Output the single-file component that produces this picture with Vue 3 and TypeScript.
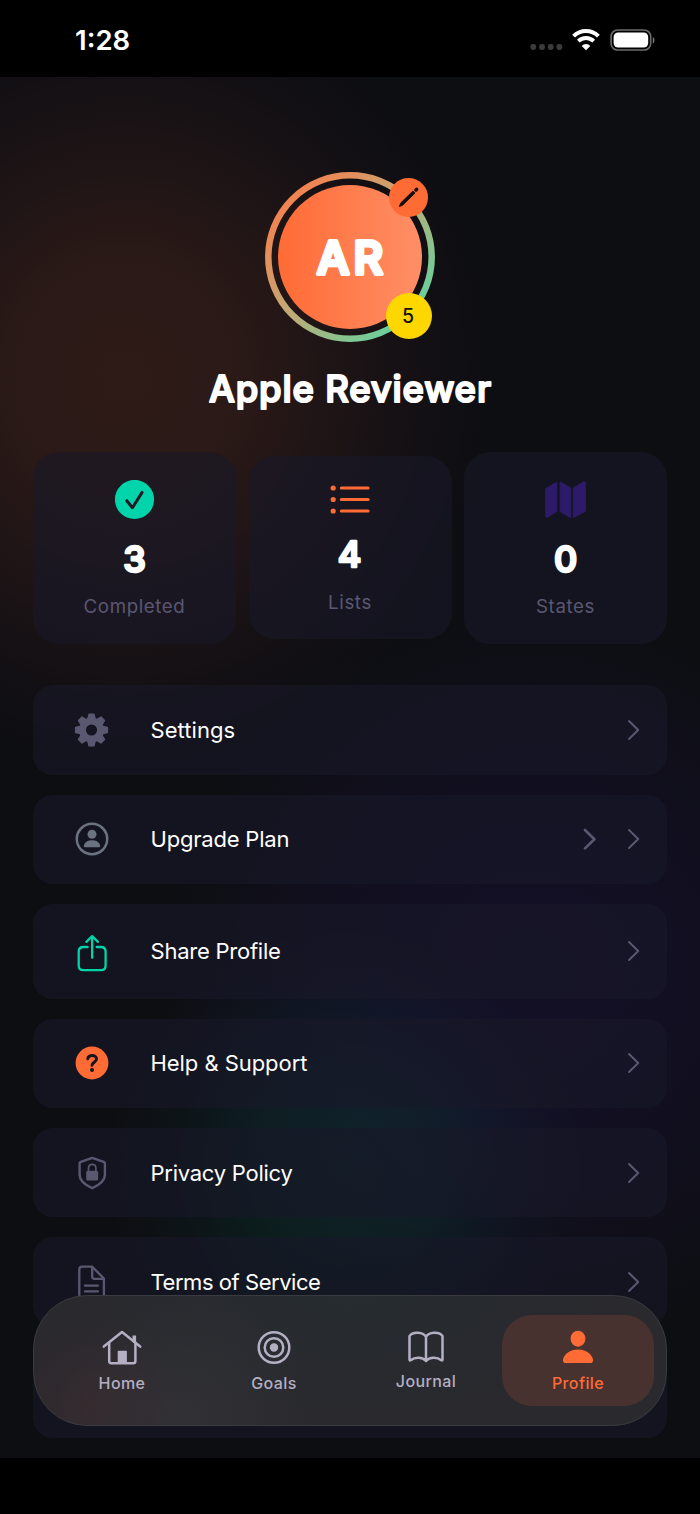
<script setup lang="ts">
interface Stat {
  icon: 'check' | 'list' | 'map'
  value: string
  label: string
}

interface MenuRow {
  icon: 'gear' | 'user' | 'share' | 'help' | 'shield' | 'doc' | 'none'
  label: string
  tall: string
  tracking: number
  extra?: boolean
}

interface Tab {
  icon: 'home' | 'goals' | 'journal' | 'profile'
  label: string
  active?: boolean
}

const stats: Stat[] = [
  { icon: 'check', value: '3', label: 'Completed' },
  { icon: 'list', value: '4', label: 'Lists' },
  { icon: 'map', value: '0', label: 'States' },
]

const rows: MenuRow[] = [
  { icon: 'gear', label: 'Settings', tall: 'h-a', tracking: 0.05 },
  { icon: 'user', label: 'Upgrade Plan', tall: 'h-b', tracking: -0.2, extra: true },
  { icon: 'share', label: 'Share Profile', tall: 'h-c', tracking: -0.24 },
  { icon: 'help', label: 'Help & Support', tall: 'h-b', tracking: -0.05 },
  { icon: 'shield', label: 'Privacy Policy', tall: 'h-b', tracking: -0.25 },
  { icon: 'doc', label: 'Terms of Service', tall: 'h-b', tracking: -0.45 },
  { icon: 'none', label: '', tall: 'h-d', tracking: 0 },
]

const tabs: Tab[] = [
  { icon: 'home', label: 'Home' },
  { icon: 'goals', label: 'Goals' },
  { icon: 'journal', label: 'Journal' },
  { icon: 'profile', label: 'Profile', active: true },
]

const teeth: number[] = [0, 45, 90, 135, 180, 225, 270, 315]
</script>

<template>
  <div class="phone">
    <header class="status">
      <span class="time">1:28</span>
      <div class="indicators">
        <svg class="dots" width="34" height="8" viewBox="0 0 34 8">
          <rect v-for="n in 4" :key="n" :x="(n - 1) * 8.7 + 0.4" y="1" width="5.8" height="6" rx="2.4" fill="#3b3b3d" />
        </svg>
        <svg class="wifi" width="28" height="22" viewBox="0 0 28 22">
          <path d="M1.6 7.2A17.4 17.4 0 0 1 26.4 7.2" fill="none" stroke="#fff" stroke-width="4" />
          <path d="M6.3 12.200A10.900 10.900 0 0 1 21.700 12.200" fill="none" stroke="#fff" stroke-width="3.800" />
          <path d="M14 21.200L9.700 16.900A6 6 0 0 1 18.300 16.900Z" fill="#fff" />
        </svg>
        <svg class="battery" width="46" height="22" viewBox="0 0 46 22">
          <rect x="1.1" y="1" width="39.6" height="20" rx="6.6" fill="none" stroke="#6c6c6e" stroke-width="1.6" />
          <rect x="3.6" y="3.4" width="34.6" height="15.2" rx="4.6" fill="#fff" />
          <path d="M42.8 8v6.6c2.2-.7 2.2-5.900 0-6.600z" fill="#77777a" />
        </svg>
      </div>
    </header>

    <main class="stage">
      <section class="profile">
        <div class="avatar">
          <svg class="ring" width="170" height="170" viewBox="0 0 170 170">
            <defs>
              <linearGradient id="ringFill" x1="0.1" y1="0.1" x2="0.9" y2="0.9">
                <stop offset="0" stop-color="#f77f4d" />
                <stop offset="0.5" stop-color="#bfab77" />
                <stop offset="1" stop-color="#5fd4a0" />
              </linearGradient>
              <linearGradient id="faceFill" x1="0" y1="0" x2="1" y2="0">
                <stop offset="0" stop-color="#ff6b35" />
                <stop offset="1" stop-color="#ff8f66" />
              </linearGradient>
            </defs>
            <circle cx="85" cy="85" r="81.700" fill="none" stroke="url(#ringFill)" stroke-width="6.500" />
            <circle cx="85" cy="85" r="72" fill="url(#faceFill)" />
            <text class="round initials" x="52" y="102.300" textLength="66">AR</text>
          </svg>
          <div class="edit">
            <svg width="39" height="39" viewBox="0 0 39 39">
              <path d="M10.300 28.600l1.300-3.500L24 12.900l2.100 2.100L13.700 27.200z" fill="#15100f" stroke="#15100f" stroke-width="0.800" stroke-linejoin="round" />
              <path d="M27 11.900l.6-.6" stroke="#15100f" stroke-width="3.600" stroke-linecap="round" />
            </svg>
          </div>
          <div class="level">5</div>
        </div>
        <svg class="name" width="300" height="50" viewBox="0 0 300 50">
          <text class="round title" x="9" y="37.300" textLength="282">Apple Reviewer</text>
        </svg>
      </section>

      <section class="stats">
        <article v-for="s in stats" :key="s.label" class="stat" :class="s.icon">
          <svg v-if="s.icon === 'check'" width="40" height="40" viewBox="0.5 0.5 40 40">
            <circle cx="20" cy="20" r="19.600" fill="#00d4aa" />
            <path d="M12.300 21.200l5.600 7L27.600 12.900" fill="none" stroke="#211a24" stroke-width="3" stroke-linecap="round" stroke-linejoin="round" />
          </svg>
          <svg v-else-if="s.icon === 'list'" width="40" height="32" viewBox="0 0 40 32">
            <g v-for="y in [4, 15.500, 27]" :key="y" fill="#ff6b35">
              <circle cx="3.200" :cy="y" r="2.600" />
              <rect x="9.800" :y="y - 1.500" width="29.800" height="3" rx="1.500" />
            </g>
          </svg>
          <svg v-else width="42" height="40" viewBox="0.5 0.3 42 40">
            <g fill="#2d1b69" stroke="#2d1b69" stroke-width="1" stroke-linejoin="round">
              <path d="M1.200 9L12.200 2.500V31.800L3 37.500Q1.200 38.200 1.200 36.500z" />
              <path d="M15.600 2.200L26.200 8.300V38L15.600 31.800z" />
              <path d="M28.800 8.300L39 2.200Q40.800 1.600 40.800 3.300V31.600L28.800 38z" />
            </g>
          </svg>
          <svg class="value" width="60" height="60" viewBox="0 0 60 60">
            <text class="round number" x="29.500" y="42" text-anchor="middle">{{ s.value }}</text>
          </svg>
          <span class="caption">{{ s.label }}</span>
        </article>
      </section>

      <nav class="menu">
        <div v-for="(r, i) in rows" :key="i" class="row" :class="r.tall">
          <div class="glyph">
            <svg v-if="r.icon === 'gear'" width="36" height="36" viewBox="-18 -18 36 36">
              <circle r="9.300" fill="none" stroke="#5a5870" stroke-width="7.200" />
              <path v-for="a in teeth" :key="a" d="M-3.700 -11.500L-2.500 -16.300H2.500L3.700 -11.500z" :transform="`rotate(${a})`" fill="#5a5870" stroke="#5a5870" stroke-width="1.500" stroke-linejoin="round" />
            </svg>
            <svg v-else-if="r.icon === 'user'" width="34" height="34" viewBox="0 0 34 34">
              <circle cx="17" cy="17" r="15.200" fill="none" stroke="#6b7280" stroke-width="2.500" />
              <circle cx="17" cy="12.200" r="4.500" fill="#6b7280" />
              <path d="M9.500 25.200C7.800 25.200 8.900 18.300 17 18.300S26.200 25.200 24.500 25.200z" fill="#6b7280" />
            </svg>
            <svg v-else-if="r.icon === 'share'" class="nudge" width="34" height="38" viewBox="0 0 34 38">
              <path d="M12.600 13H8.400Q3.700 13 3.700 17.700V31.500Q3.700 36.200 8.400 36.200H25.900Q30.600 36.200 30.600 31.500V17.700Q30.600 13 25.900 13H21.700M17.150 23.800V2.600M11.400 7.900L17.150 2.100L22.900 7.900" fill="none" stroke="#00d4aa" stroke-width="2.300" stroke-linecap="round" stroke-linejoin="round" />
            </svg>
            <svg v-else-if="r.icon === 'help'" width="34" height="34" viewBox="0 0 34 34">
              <circle cx="17" cy="17" r="16.400" fill="#ff6b35" />
              <path d="M12.800 12.800C13 8.300 21.700 8.300 21.500 13C21.400 16.200 17.100 16.200 17 19.300" fill="none" stroke="#15141f" stroke-width="3" stroke-linecap="round" />
              <circle cx="17" cy="24" r="2" fill="#15141f" />
            </svg>
            <svg v-else-if="r.icon === 'shield'" width="34" height="34" viewBox="0 0 34 34">
              <path d="M17.200 1.900L29.300 6.200Q29.900 6.500 29.900 7.200V19C29.900 26 22 30 17.200 32.200C12.400 30 4.600 26 4.600 19V7.200Q4.600 6.500 5.200 6.200z" fill="none" stroke="#5a5870" stroke-width="2.400" stroke-linejoin="round" />
              <rect x="11.200" y="14.800" width="12" height="9.800" rx="1.600" fill="#5a5870" />
              <path d="M13.500 15.500V12.300C13.500 7 20.900 7 20.900 12.300V15.500" fill="none" stroke="#5a5870" stroke-width="1.700" />
            </svg>
            <svg v-else-if="r.icon === 'doc'" width="34" height="36" viewBox="0 0 34 36">
              <path d="M17.200 2.700H7Q4.300 2.700 4.300 5.400V31Q4.300 33.700 7 33.700H26.200Q28.900 33.700 28.900 31V14.500zM17.200 2.700V12.600Q17.200 14.900 19.500 14.900H28.700M9.900 21.600H22.900M9.900 27.400H22.900" fill="none" stroke="#5a5870" stroke-width="2.300" stroke-linecap="round" stroke-linejoin="round" />
            </svg>
          </div>
          <span class="label" :style="{ letterSpacing: `${r.tracking}px` }">{{ r.label }}</span>
          <svg v-if="r.extra" class="chev bold" width="14" height="22" viewBox="0 0 14 22">
            <path d="M2 2L11.400 11.200L2 20.400" />
          </svg>
          <svg v-if="r.icon !== 'none'" class="chev" width="14" height="22" viewBox="0 0 14 22">
            <path d="M2 2L11.200 11L2 20" />
          </svg>
        </div>
      </nav>

      <nav class="tabbar">
        <div v-for="t in tabs" :key="t.label" class="tab" :class="[t.icon, { active: t.active }]">
          <svg v-if="t.icon === 'home'" width="40" height="36" viewBox="0.5 0 40 36">
            <g fill="none" stroke="#b4afc3" stroke-width="2.500" stroke-linecap="round" stroke-linejoin="round">
              <path d="M2.300 16.600L20.500 2.100L38.700 16.600" />
              <path d="M7.700 13V31Q7.700 33.300 10 33.300H31.600Q33.900 33.300 33.900 31V13" />
            </g>
            <path d="M31 5.500h3.600v9.500l-3.600-3z" fill="#b4afc3" />
            <rect x="16.200" y="20.800" width="9.200" height="12" rx="0.800" fill="#b4afc3" />
          </svg>
          <svg v-else-if="t.icon === 'goals'" width="36" height="36" viewBox="0 0.5 36 36">
            <circle cx="18" cy="18" r="15.300" fill="none" stroke="#b4afc3" stroke-width="2.500" />
            <circle cx="18" cy="18" r="9.300" fill="none" stroke="#b4afc3" stroke-width="2.500" />
            <circle cx="18" cy="18" r="4.200" fill="#b4afc3" />
          </svg>
          <svg v-else-if="t.icon === 'journal'" width="38" height="32" viewBox="0 0 38 32">
            <path d="M19 6C16.500 .8 5.500 .2 2.500 5.200V28.600Q2.500 29.900 3.700 29.200C8 25.800 15.500 26 19 30C22.500 26 30 25.800 34.300 29.200Q35.500 29.900 35.500 28.600V5.200C32.500 .2 21.500 .8 19 6V29.500" fill="none" stroke="#b4afc3" stroke-width="2.500" stroke-linecap="round" stroke-linejoin="round" />
          </svg>
          <svg v-else width="32" height="34" viewBox="0 0 32 34">
            <ellipse cx="16" cy="8.700" rx="7.400" ry="8" fill="#ff6b35" />
            <path d="M4 33C1.600 33 1 31.800 1 30.400C1 26 6.600 19.600 16 19.600S31 26 31 30.400C31 31.800 30.400 33 28 33z" fill="#ff6b35" />
          </svg>
          <span class="tab-label">{{ t.label }}</span>
        </div>
      </nav>
    </main>
    <footer class="home-area"></footer>
  </div>
</template>

<style>
html,
body {
  margin: 0;
  background: #000;
}
</style>

<style scoped>
.phone {
  width: 700px;
  height: 1514px;
  background: #000;
  color: #fff;
  font-family: Inter, 'Liberation Sans', sans-serif;
  overflow: hidden;
  display: flex;
  flex-direction: column;
}

.status {
  height: 77px;
  flex: none;
  display: flex;
  justify-content: space-between;
  padding: 0 44px 0 75px;
  box-sizing: border-box;
}

.time {
  font-size: 27.500px;
  font-weight: 600;
  line-height: 32px;
  margin-top: 24px;
}

.indicators {
  display: flex;
  align-items: flex-start;
}

.dots {
  margin: 43px 8px 0 0;
}

.wifi {
  margin: 29px 10px 0 0;
}

.battery {
  margin-top: 29px;
}

.stage {
  position: relative;
  height: 1381px;
  flex: none;
  overflow: hidden;
  background:
    radial-gradient(ellipse 375px 395px at 125px 300px, rgba(255, 107, 58, 0.137) 0%, rgba(255, 107, 58, 0.12) 30%, rgba(255, 100, 70, 0.062) 60%, rgba(255, 90, 90, 0.022) 80%, rgba(255, 90, 90, 0) 100%),
    radial-gradient(circle 240px at 345px 1091px, rgba(0, 212, 160, 0.1) 0%, rgba(0, 212, 165, 0.082) 35%, rgba(0, 190, 190, 0.035) 70%, rgba(0, 180, 200, 0) 100%),
    radial-gradient(circle 370px at 530px 900px, rgba(45, 20, 115, 0.2) 0%, rgba(45, 20, 115, 0.17) 40%, rgba(45, 20, 115, 0.07) 75%, rgba(45, 20, 115, 0) 100%),
    #0d0e12;
}

.profile {
  display: flex;
  flex-direction: column;
  align-items: center;
  padding-top: 95px;
}

.avatar {
  position: relative;
  width: 170px;
  height: 170px;
}

.ring,
.name,
.stat svg,
.tab svg,
.edit svg,
.glyph svg {
  display: block;
}

.round {
  fill: #fff;
  stroke: #fff;
  stroke-linejoin: round;
  font-family: Inter, 'Liberation Sans', sans-serif;
  font-weight: 500;
}

.initials {
  font-size: 45.500px;
  stroke-width: 4.200px;
}

.edit {
  position: absolute;
  left: 124px;
  top: 6px;
  width: 39px;
  height: 39px;
  border-radius: 50%;
  background: #ff6b35;
}

.level {
  position: absolute;
  left: 120.500px;
  top: 121px;
  width: 46px;
  height: 46px;
  border-radius: 50%;
  background: #ffd700;
  color: #14120a;
  font-size: 19.500px;
  font-weight: 500;
  line-height: 46px;
  text-align: center;
  text-indent: -1px;
}

.name {
  margin-top: 23px;
}

.title {
  font-size: 36.500px;
  stroke-width: 2px;
}

.stats {
  display: grid;
  grid-template-columns: repeat(3, 1fr);
  gap: 12.500px;
  align-items: center;
  padding: 0 33px;
  margin-top: 37px;
}

.stat {
  height: 191.500px;
  border-radius: 26px;
  background: rgba(25, 25, 41, 0.62);
  display: flex;
  flex-direction: column;
  align-items: center;
  box-sizing: border-box;
  padding-top: 27.500px;
}

.stat.list {
  height: 183px;
}

.stat .value {
  margin: 10px 0 -10px;
}

.stat.list .value {
  margin: 9px 0 -11px;
}

.number {
  font-size: 36px;
  stroke-width: 2.600px;
}

.caption {
  margin-top: 15px;
  font-size: 18.700px;
  line-height: 24px;
  letter-spacing: 0.600px;
  color: #5a5870;
}

.stat.list .caption {
  margin-top: 17px;
}

.menu {
  display: flex;
  flex-direction: column;
  gap: 20.200px;
  padding: 0 33px;
  margin-top: 41px;
}

.row {
  display: flex;
  align-items: center;
  flex: none;
  border-radius: 20px;
  background: rgba(25, 25, 41, 0.62);
  box-sizing: border-box;
  padding: 0 26px 0 41px;
}

.h-a {
  height: 90px;
}

.h-b {
  height: 88.900px;
  padding-top: 0.600px;
}

.h-c {
  height: 94.800px;
}

.h-d {
  height: 92px;
}

.glyph {
  width: 35px;
  display: flex;
  justify-content: center;
}

.nudge {
  margin-top: 3px;
}

.label {
  flex: 1;
  margin-left: 41.500px;
  font-size: 22px;
  line-height: 28px;
}

.chev {
  fill: none;
  stroke: #5a5870;
  stroke-width: 2;
  stroke-linecap: round;
  stroke-linejoin: round;
}

.chev.bold {
  stroke-width: 2.600;
  margin-right: 30px;
}

.tabbar {
  position: absolute;
  left: 33px;
  top: 1218px;
  width: 634px;
  height: 131px;
  box-sizing: border-box;
  border: 1.500px solid #3a3b41;
  border-radius: 54px;
  background:
    radial-gradient(circle 90px at 56px 108px, rgba(80, 44, 46, 0.28), rgba(80, 44, 46, 0)),
    radial-gradient(circle 130px at 150px 120px, rgba(58, 58, 62, 0.45), rgba(58, 58, 62, 0)),
    radial-gradient(ellipse 260px 120px at 320px 0, rgba(36, 46, 50, 0.6), rgba(36, 46, 50, 0)),
    #29292e;
  display: flex;
  padding: 19px 12px;
}

.tab {
  width: 152px;
  height: 91px;
  flex: none;
  border-radius: 30px;
  display: flex;
  flex-direction: column;
  align-items: center;
  box-sizing: border-box;
  padding-top: 15px;
  color: #b4afc3;
}

.tab.active {
  background: #48322f;
  color: #ff6b35;
}

.tab.journal {
  padding-top: 16px;
}

.tab-label {
  font-size: 16px;
  font-weight: 500;
  line-height: 20px;
  letter-spacing: 0.400px;
  margin-top: 7px;
}

.tab.journal .tab-label {
  margin-top: 8px;
}

.tab.active .tab-label {
  margin-top: 9px;
}

.home-area {
  flex: 1;
  background: #000;
}
</style>
